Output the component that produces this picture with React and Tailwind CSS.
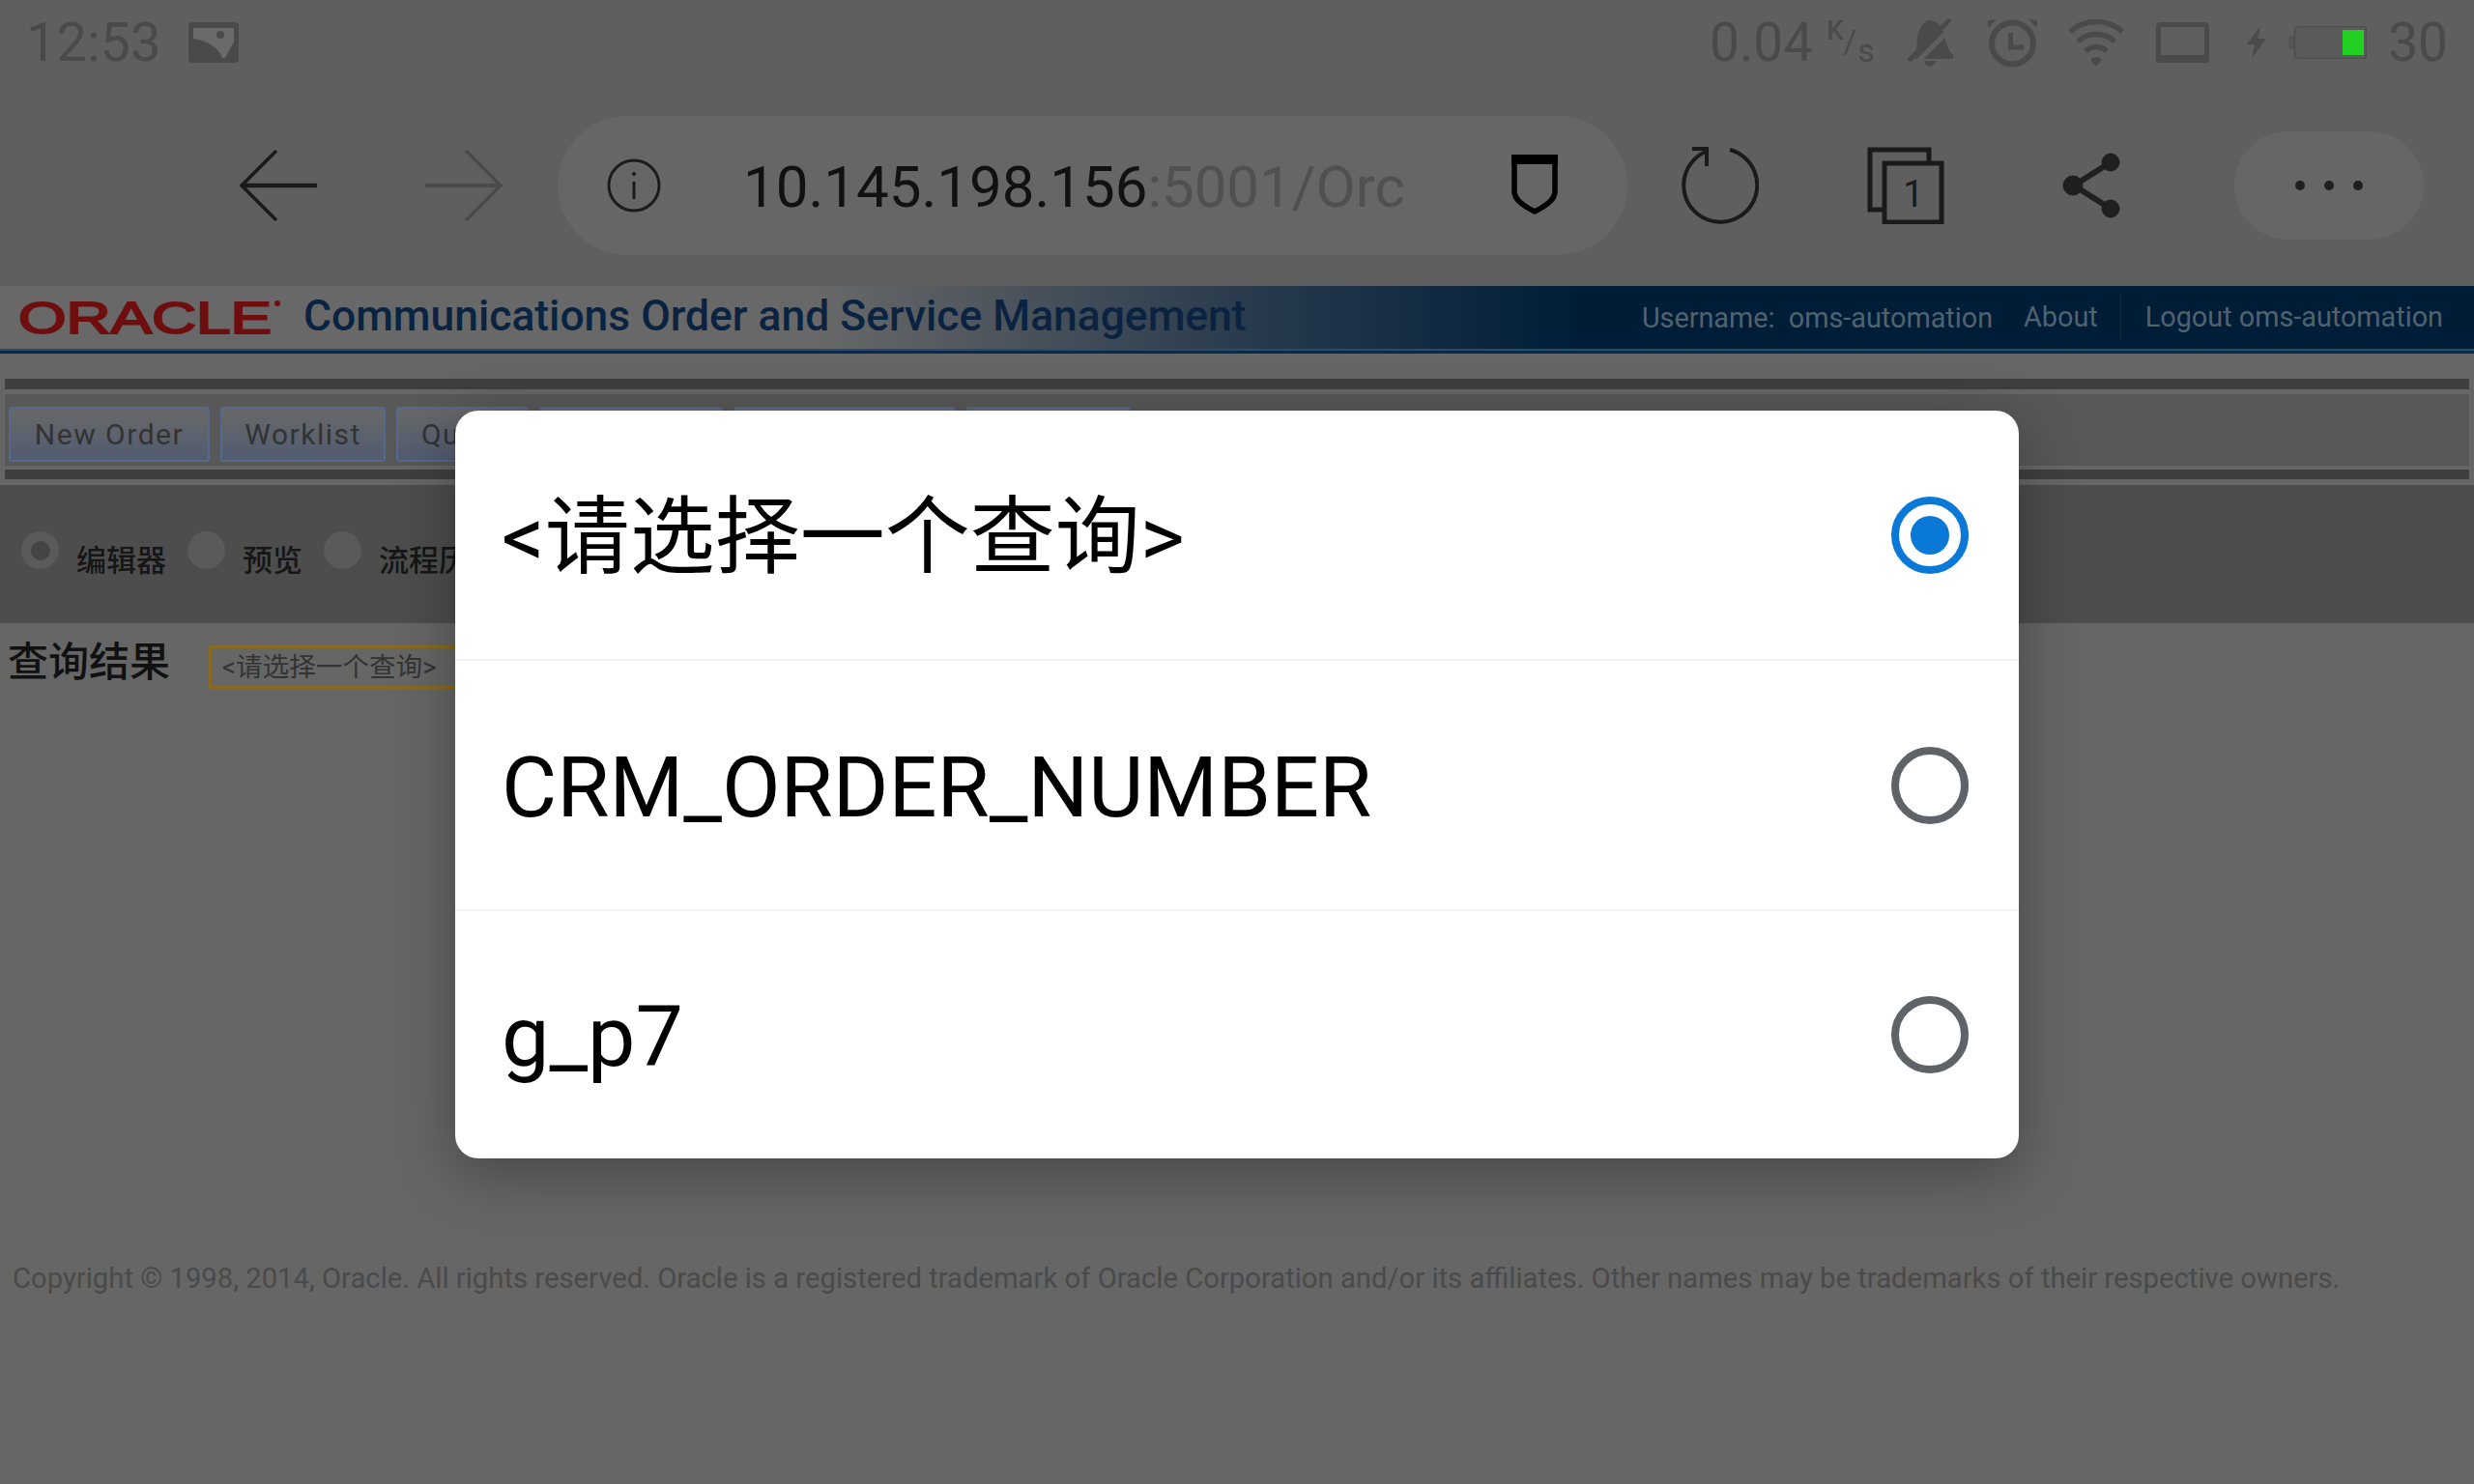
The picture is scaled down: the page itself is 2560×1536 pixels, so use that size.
const ICON = "#4a4a4a";
const BAR = "#5f5f5f";

function PictureIcon() {
  return (
    <svg width="52" height="42" viewBox="0 0 52 42" className="ml-[29px]">
      <rect width="52" height="42" rx="4" fill={ICON} />
      <path d="M5 6H47V20L38 37H35C31 26 20 19 5 17Z" fill="#6a6a6a" />
      <circle cx="33" cy="13" r="4" fill={ICON} />
    </svg>
  );
}

function BellOffIcon() {
  return (
    <svg width="50" height="50" viewBox="0 0 50 50" className="ml-[35px]">
      <path d="M10 34C11 26 10 18 14 10C17 5 20 2 24 2C31 3 36 8 38 13C40 20 40 30 48 38V42H9Z" fill={ICON} />
      <path d="M18 44H30C29 51 19 51 18 44Z" fill={ICON} />
      <path d="M8 48L50 6" stroke={BAR} strokeWidth="5" />
      <path d="M2 44L45 1" stroke={ICON} strokeWidth="5" />
      <path d="M0 50L14 36H0Z" fill={BAR} />
      <path d="M2 44L12 34" stroke={ICON} strokeWidth="5" />
    </svg>
  );
}

function AlarmIcon() {
  return (
    <svg width="51" height="51" viewBox="0 0 51 51" className="ml-[34px]" fill="none" stroke={ICON}>
      <circle cx="25.5" cy="26" r="21.5" strokeWidth="6" />
      <path d="M23.5 15V30H37" strokeWidth="5" />
      <path d="M0 3L8 1L1 9ZM51 3L43 1L50 9Z" fill={ICON} strokeWidth="1" />
    </svg>
  );
}

function WifiIcon() {
  return (
    <svg width="58" height="50" viewBox="0 0 58 50" className="ml-[32px]" fill="none" stroke={ICON} strokeWidth="5.5">
      <path d="M2 14C17 0 41 0 56 14" />
      <path d="M10 24C20 14 38 14 48 24" />
      <path d="M18 34C24 28 34 28 40 34" />
      <path d="M23 43L29 50L35 43C32 39 26 39 23 43Z" fill={ICON} stroke="none" />
    </svg>
  );
}

function RotateIcon() {
  return (
    <svg width="55" height="42" viewBox="0 0 55 42" className="ml-[33px]" fill="none">
      <rect x="2.5" y="2.5" width="50" height="37" rx="2" stroke={ICON} strokeWidth="5" />
      <rect x="0" y="34" width="55" height="8" rx="2" fill={ICON} />
    </svg>
  );
}

function BoltIcon() {
  return (
    <svg width="20" height="34" viewBox="0 0 20 34" className="ml-[39px]">
      <path d="M14 0L0 19H8L5 34L20 13H11Z" fill={ICON} />
    </svg>
  );
}

function BatteryIcon() {
  return (
    <svg width="81" height="34" viewBox="0 0 81 34" className="ml-[23px]">
      <rect x="0" y="10" width="6" height="14" rx="2" fill="#555555" />
      <rect x="6.5" y="0.5" width="74" height="33" rx="3" fill="#5a5a5a" stroke="#4d4d4d" strokeWidth="1.5" />
      <rect x="56" y="4" width="22" height="26" fill="#22d022" />
    </svg>
  );
}

function StatusBar() {
  return (
    <div className="flex h-[88px] items-center pl-[27px] pr-[27px] text-[55px] leading-none text-[#4a4a4a]">
      <span className="text-[56px]">12:53</span>
      <PictureIcon />
      <span className="ml-auto">0.04</span>
      <span className="relative ml-[14px] h-[50px] w-[48px]">
        <span className="absolute left-0 top-0 text-[27px] font-medium">K</span>
        <span className="absolute left-[17px] top-[7px] text-[34px]">/</span>
        <span className="absolute left-[32px] top-[16px] text-[34px]">s</span>
      </span>
      <BellOffIcon />
      <AlarmIcon />
      <WifiIcon />
      <RotateIcon />
      <BoltIcon />
      <BatteryIcon />
      <span className="ml-[22px]">30</span>
    </div>
  );
}

function Arrow({ flip, color }) {
  return (
    <svg width="80" height="74" viewBox="0 0 80 74" fill="none" stroke={color} className={flip ? "-scale-x-100" : ""}>
      <path d="M2 37H80" strokeWidth="4.5" />
      <path d="M38 1L2 37L38 73" strokeWidth="3.5" />
    </svg>
  );
}

function InfoIcon() {
  return (
    <svg width="56" height="56" viewBox="0 0 56 56" fill="none" stroke="#1c1c1c" className="ml-[51px] shrink-0">
      <circle cx="28" cy="28" r="26" strokeWidth="3" />
      <path d="M28 24V42" strokeWidth="3" />
      <circle cx="28" cy="16" r="2" fill="#1c1c1c" stroke="none" />
    </svg>
  );
}

function ShieldIcon() {
  return (
    <svg width="48" height="63" viewBox="0 0 48 63" className="absolute left-[987px] top-[40px]">
      <path d="M3 3H45V38C45 46 38 52 24 59C10 52 3 46 3 38Z" fill="none" stroke="#000000" strokeWidth="5.5" />
      <rect width="48" height="10" fill="#000000" />
    </svg>
  );
}

function ReloadIcon() {
  return (
    <svg width="80" height="80" viewBox="0 0 80 80" fill="none" stroke="#1a1a1a" strokeWidth="4">
      <path d="M50 3A38 38 0 1 1 26 4.5" />
      <path d="M11 2H26V20" />
    </svg>
  );
}

function TabsIcon() {
  return (
    <svg width="80" height="80" viewBox="0 0 80 80" fill="none" stroke="#1a1a1a" strokeWidth="5">
      <rect x="3" y="3" width="61" height="62" />
      <rect x="18" y="17" width="59" height="61" fill={BAR} />
      <text x="48" y="62" textAnchor="middle" fontSize="38" fill="#1a1a1a" stroke="none" fontFamily="Roboto">
        1
      </text>
    </svg>
  );
}

function ShareIcon() {
  return (
    <svg width="61" height="68" viewBox="0 0 61 68" fill="#1f1f1f" stroke="#1f1f1f">
      <path d="M50 10L12 34L50 58" fill="none" strokeWidth="6" />
      <circle cx="50" cy="10" r="9" />
      <circle cx="11" cy="34" r="10" />
      <circle cx="50" cy="58" r="9" />
    </svg>
  );
}

function BrowserBar() {
  return (
    <div className="flex h-[208px] items-center pl-[248px]">
      <Arrow color="#1a1a1a" />
      <div className="ml-[112px]">
        <Arrow flip color="#4a4a4a" />
      </div>
      <div className="relative ml-[57px] flex h-[144px] w-[1107px] items-center rounded-full bg-[#666666]">
        <InfoIcon />
        <div className="ml-[85px] mt-[3px] w-[700px] whitespace-nowrap text-[60px] leading-[70px] text-[#111111]">
          10.145.198.156<span className="text-[#505050]">:5001/Orc</span>
        </div>
        <ShieldIcon />
      </div>
      <div className="ml-[56px]">
        <ReloadIcon />
      </div>
      <div className="ml-[112px]">
        <TabsIcon />
      </div>
      <div className="ml-[122px]">
        <ShareIcon />
      </div>
      <div className="ml-[117px] flex h-[112px] w-[196px] items-center justify-center gap-[20px] rounded-full bg-[#666666]">
        <span className="size-[10px] rounded-full bg-[#1f1f1f]" />
        <span className="size-[10px] rounded-full bg-[#1f1f1f]" />
        <span className="size-[10px] rounded-full bg-[#1f1f1f]" />
      </div>
    </div>
  );
}

function OracleLogo() {
  return (
    <svg width="276" height="56" viewBox="0 0 276 56" className="ml-[18px] shrink-0">
      <text
        x="1"
        y="44"
        textLength="262"
        lengthAdjust="spacingAndGlyphs"
        fontFamily="Liberation Sans"
        fontSize="46"
        fill="#6e0e0e"
        stroke="#6e0e0e"
        strokeWidth="2"
      >
        ORACLE
      </text>
      <circle cx="269" cy="13" r="3" fill="#6e0e0e" />
    </svg>
  );
}

function Header() {
  return (
    <div className="flex h-[65px] items-center bg-[linear-gradient(90deg,#686868_0%,#686868_33%,#2a3c4e_50%,#001d38_64%,#001d38_100%)] text-[28.8px] text-[#50626e]">
      <OracleLogo />
      <span className="ml-[20px] mb-[3px] whitespace-nowrap text-[44.4px] font-medium leading-none text-[#0a2340]">
        Communications Order and Service Management
      </span>
      <span className="ml-auto mt-[3px] whitespace-pre">Username:  oms-automation</span>
      <span className="ml-[32px]">About</span>
      <span className="ml-[23px] h-[50px] w-px bg-[#0a2a44]" />
      <span className="ml-[25px] mr-[32px]">Logout oms-automation</span>
    </div>
  );
}

function NavButton({ label, className }) {
  return (
    <div
      className={`flex h-[57px] items-center justify-center rounded-[3px] border-2 border-[#56698c] bg-[linear-gradient(180deg,#686868,#515c72)] text-[30px] tracking-[1.5px] text-[#333333] ${className}`}
    >
      {label}
    </div>
  );
}

function NavPanel() {
  return (
    <div className="px-[5px] pt-[26px]">
      <div className="h-[11px] bg-[#3f3f3f]" />
      <div className="mt-[5px] flex h-[74px] gap-[11px] bg-[#585858] pl-[4px] pt-[13px]">
        <NavButton label="New Order" className="w-[208px]" />
        <NavButton label="Worklist" className="w-[171px]" />
        <NavButton label="Query" className="w-[137px]" />
        <NavButton className="w-[190px]" />
        <NavButton className="w-[230px]" />
        <NavButton className="w-[170px]" />
      </div>
      <div className="mt-[4px] h-[10px] bg-[#3f3f3f]" />
    </div>
  );
}

function ViewRadio({ label, checked, className }) {
  return (
    <div className={`flex items-start ${className}`}>
      <span className="flex size-[39px] items-center justify-center rounded-full bg-[#5a5a5a]">
        {checked && <span className="size-[20px] rounded-full bg-[#444444]" />}
      </span>
      <span className="ml-[18px] mt-[15px] whitespace-nowrap text-[31px] font-medium leading-none text-[#161616]">
        {label}
      </span>
    </div>
  );
}

function ViewBand() {
  return (
    <div className="mt-[6px] flex h-[143px] items-start bg-[#4d4d4d] pl-[22px] pt-[48px]">
      <ViewRadio label="编辑器" checked />
      <ViewRadio label="预览" className="ml-[22px]" />
      <ViewRadio label="流程历史" className="ml-[22px]" />
    </div>
  );
}

function QueryRow() {
  return (
    <div className="flex items-start pl-[8px] pt-[19px]">
      <span className="text-[42px] font-medium leading-[44px] text-[#111111]">查询结果</span>
      <div className="ml-[40px] mt-[4px] flex h-[45px] w-[400px] items-center rounded-[2px] border-[3px] border-[#8a6a1e] pl-[11px] text-[27.6px] leading-none text-[#333333]">
        &lt;请选择一个查询&gt;
      </div>
    </div>
  );
}

function QueryOption({ label, selected, className }) {
  return (
    <div className={`flex items-center justify-between pl-[48px] pr-[52px] text-[88px] leading-none text-black ${className}`}>
      <span className="mt-[4px]">{label}</span>
      {selected ? (
        <span className="flex size-[80px] items-center justify-center rounded-full border-[8px] border-[#0a78d7]">
          <span className="size-[40px] rounded-full bg-[#0a78d7]" />
        </span>
      ) : (
        <span className="size-[80px] rounded-full border-[8px] border-[#5f6368]" />
      )}
    </div>
  );
}

function QueryDialog() {
  return (
    <div className="absolute left-[471px] top-[425px] w-[1618px] overflow-hidden rounded-[24px] bg-white shadow-[0_16px_64px_rgba(0,0,0,0.32)]">
      <QueryOption label="<请选择一个查询>" selected className="h-[257px]" />
      <div className="h-[2px] bg-[#f0f4f7]" />
      <QueryOption label="CRM_ORDER_NUMBER" className="h-[257px]" />
      <div className="h-[2px] bg-[#f0f4f7]" />
      <QueryOption label="g_p7" className="h-[256px]" />
    </div>
  );
}

export default function App() {
  return (
    <div className="relative h-[1536px] w-[2560px] overflow-hidden bg-[#666666] [font-family:Roboto,'Noto_Sans_CJK_SC',sans-serif]">
      <div className="bg-[#5f5f5f]">
        <StatusBar />
        <BrowserBar />
      </div>
      <Header />
      <div className="h-[5px] border-t-2 border-[#2a4a70] bg-[#0a2a4a]" />
      <NavPanel />
      <ViewBand />
      <QueryRow />
      <p className="ml-[13px] mt-[595px] whitespace-nowrap text-[29.26px] leading-[30px] text-[#4a4a4a]">
        Copyright © 1998, 2014, Oracle. All rights reserved. Oracle is a registered trademark of Oracle Corporation
        and/or its affiliates. Other names may be trademarks of their respective owners.
      </p>
      <QueryDialog />
    </div>
  );
}
